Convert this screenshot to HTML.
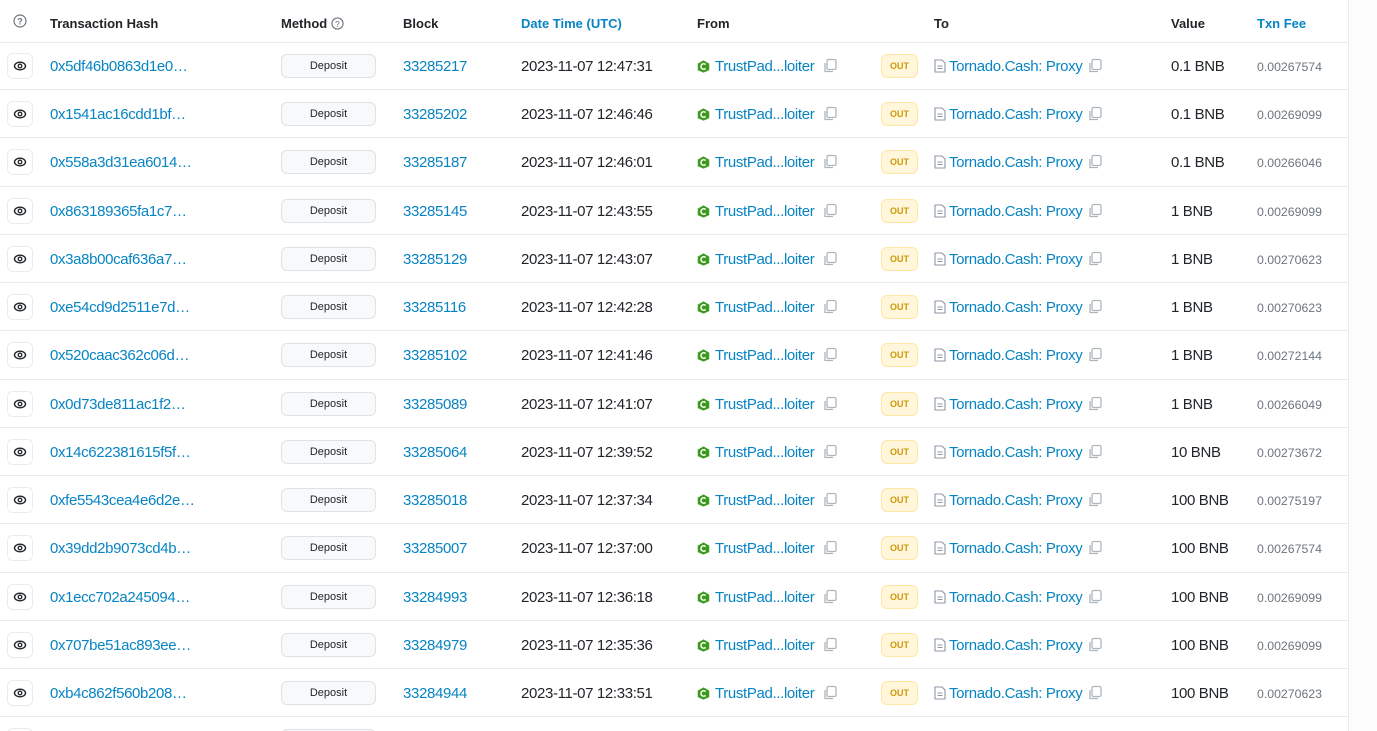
<!DOCTYPE html>
<html><head><meta charset="utf-8"><style>
*{margin:0;padding:0;box-sizing:border-box}
html,body{width:1377px;height:731px;overflow:hidden}
body{background:#fff;font-family:"Liberation Sans",Arial,sans-serif;color:#212529;position:relative}
.side{position:absolute;left:1348px;top:0;width:29px;height:731px;background:#fcfcfd;border-left:1px solid #e9ecef}
.hdr{position:absolute;top:0;left:0;width:1348px;height:43px;border-bottom:1px solid #e9ecef;font-size:13px;font-weight:bold}
.hdr span{position:absolute;top:16px}
.r{position:absolute;left:0;width:1348px;height:48.23px;border-bottom:1px solid #e9ecef;font-size:15px;letter-spacing:-0.35px}
.r>*{position:absolute}
.eye{left:7px;top:11px;width:26px;height:26px;border:1px solid #e9ecef;border-radius:6px;display:flex;align-items:center;justify-content:center}
.h{left:50px;top:16px;color:#0784c3}
.m{left:281px;top:12px;width:95px;height:24px;background:#f8f9fa;border:1px solid #dee2e6;border-radius:6px;font-size:11px;letter-spacing:0;text-align:center;line-height:22px;color:#212529}
.b{left:403px;top:16px;color:#0784c3}
.d{left:521px;top:16px}
.fi{left:697px;top:18px}
.f{left:715px;top:16px;color:#0784c3}
.c1{left:822px;top:16px}
.out{left:881px;top:12px;width:37px;height:24px;background:#fff6dc;border:1px solid #ffe7a3;border-radius:6px;font-size:9px;letter-spacing:0;font-weight:bold;color:#cc9a06;text-align:center;line-height:22px}
.ti{left:934px;top:17px}
.t{left:949px;top:16px;color:#0784c3}
.c2{left:1087px;top:16px}
.v{left:1171px;top:16px}
.fee{left:1257px;top:18px;font-size:12.3px;letter-spacing:0;color:#6c757d}
</style></head><body>
<div class="side"></div>
<div class="hdr">
<span style="left:13px;top:14px"><svg width="14" height="14" viewBox="0 0 14 14"><circle cx="7" cy="7" r="6" fill="none" stroke="#6c757d" stroke-width="1.2"/><text x="7" y="10.5" font-size="9" text-anchor="middle" fill="#6c757d" font-family="Liberation Sans">?</text></svg></span>
<span style="left:50px">Transaction Hash</span>
<span style="left:281px">Method <svg width="13" height="13" viewBox="0 0 14 14" style="vertical-align:-2px"><circle cx="7" cy="7" r="6" fill="none" stroke="#6c757d" stroke-width="1.2"/><text x="7" y="10.5" font-size="9" text-anchor="middle" fill="#6c757d" font-weight="normal" font-family="Liberation Sans">?</text></svg></span>
<span style="left:403px">Block</span>
<span style="left:521px;color:#0784c3">Date Time (UTC)</span>
<span style="left:697px">From</span>
<span style="left:934px">To</span>
<span style="left:1171px">Value</span>
<span style="left:1257px;color:#0784c3">Txn Fee</span>
</div>
<svg width="0" height="0" style="position:absolute"><defs>
<symbol id="eye" viewBox="0 0 14 14"><ellipse cx="7" cy="7" rx="5.5" ry="3.8" fill="none" stroke="#212529" stroke-width="1.4"/><circle cx="7" cy="7" r="1.8" fill="none" stroke="#212529" stroke-width="1.3"/></symbol>
<symbol id="cp" viewBox="0 0 16 16"><rect x="5" y="1.5" width="9" height="10" rx="1.5" fill="none" stroke="#adb5bd" stroke-width="1.3"/><path d="M3 5v8.5h8" fill="none" stroke="#adb5bd" stroke-width="1.3"/></symbol>
<symbol id="doc" viewBox="0 0 12 14"><path d="M1 1h7l3 3v9H1z" fill="none" stroke="#8c98a4" stroke-width="1.1"/><path d="M3.5 7h5M3.5 9.5h5" stroke="#8c98a4" stroke-width="1"/></symbol>
<symbol id="hex" viewBox="0 0 12 12"><path d="M6 0.3l5.3 3v6L6 11.7 0.7 9.3v-6z" fill="#3d9a1f"/><path d="M7.9 4.2A2.5 2.5 0 1 0 7.9 7.8" fill="none" stroke="#fff" stroke-width="1.4"/></symbol>
</defs></svg>
<div class="r" style="top:42px"><div class="eye"><svg width="14" height="14"><use href="#eye"/></svg></div><div class="h">0x5df46b0863d1e0…</div><div class="m">Deposit</div><div class="b">33285217</div><div class="d">2023-11-07 12:47:31</div><svg class="fi" width="13" height="13"><use href="#hex"/></svg><div class="f">TrustPad...loiter</div><svg class="c1" width="16" height="16"><use href="#cp"/></svg><div class="out">OUT</div><svg class="ti" width="12" height="14"><use href="#doc"/></svg><div class="t">Tornado.Cash: Proxy</div><svg class="c2" width="16" height="16"><use href="#cp"/></svg><div class="v">0.1 BNB</div><div class="fee">0.00267574</div></div>
<div class="r" style="top:90.23px"><div class="eye"><svg width="14" height="14"><use href="#eye"/></svg></div><div class="h">0x1541ac16cdd1bf…</div><div class="m">Deposit</div><div class="b">33285202</div><div class="d">2023-11-07 12:46:46</div><svg class="fi" width="13" height="13"><use href="#hex"/></svg><div class="f">TrustPad...loiter</div><svg class="c1" width="16" height="16"><use href="#cp"/></svg><div class="out">OUT</div><svg class="ti" width="12" height="14"><use href="#doc"/></svg><div class="t">Tornado.Cash: Proxy</div><svg class="c2" width="16" height="16"><use href="#cp"/></svg><div class="v">0.1 BNB</div><div class="fee">0.00269099</div></div>
<div class="r" style="top:138.46px"><div class="eye"><svg width="14" height="14"><use href="#eye"/></svg></div><div class="h">0x558a3d31ea6014…</div><div class="m">Deposit</div><div class="b">33285187</div><div class="d">2023-11-07 12:46:01</div><svg class="fi" width="13" height="13"><use href="#hex"/></svg><div class="f">TrustPad...loiter</div><svg class="c1" width="16" height="16"><use href="#cp"/></svg><div class="out">OUT</div><svg class="ti" width="12" height="14"><use href="#doc"/></svg><div class="t">Tornado.Cash: Proxy</div><svg class="c2" width="16" height="16"><use href="#cp"/></svg><div class="v">0.1 BNB</div><div class="fee">0.00266046</div></div>
<div class="r" style="top:186.69px"><div class="eye"><svg width="14" height="14"><use href="#eye"/></svg></div><div class="h">0x863189365fa1c7…</div><div class="m">Deposit</div><div class="b">33285145</div><div class="d">2023-11-07 12:43:55</div><svg class="fi" width="13" height="13"><use href="#hex"/></svg><div class="f">TrustPad...loiter</div><svg class="c1" width="16" height="16"><use href="#cp"/></svg><div class="out">OUT</div><svg class="ti" width="12" height="14"><use href="#doc"/></svg><div class="t">Tornado.Cash: Proxy</div><svg class="c2" width="16" height="16"><use href="#cp"/></svg><div class="v">1 BNB</div><div class="fee">0.00269099</div></div>
<div class="r" style="top:234.92px"><div class="eye"><svg width="14" height="14"><use href="#eye"/></svg></div><div class="h">0x3a8b00caf636a7…</div><div class="m">Deposit</div><div class="b">33285129</div><div class="d">2023-11-07 12:43:07</div><svg class="fi" width="13" height="13"><use href="#hex"/></svg><div class="f">TrustPad...loiter</div><svg class="c1" width="16" height="16"><use href="#cp"/></svg><div class="out">OUT</div><svg class="ti" width="12" height="14"><use href="#doc"/></svg><div class="t">Tornado.Cash: Proxy</div><svg class="c2" width="16" height="16"><use href="#cp"/></svg><div class="v">1 BNB</div><div class="fee">0.00270623</div></div>
<div class="r" style="top:283.15px"><div class="eye"><svg width="14" height="14"><use href="#eye"/></svg></div><div class="h">0xe54cd9d2511e7d…</div><div class="m">Deposit</div><div class="b">33285116</div><div class="d">2023-11-07 12:42:28</div><svg class="fi" width="13" height="13"><use href="#hex"/></svg><div class="f">TrustPad...loiter</div><svg class="c1" width="16" height="16"><use href="#cp"/></svg><div class="out">OUT</div><svg class="ti" width="12" height="14"><use href="#doc"/></svg><div class="t">Tornado.Cash: Proxy</div><svg class="c2" width="16" height="16"><use href="#cp"/></svg><div class="v">1 BNB</div><div class="fee">0.00270623</div></div>
<div class="r" style="top:331.38px"><div class="eye"><svg width="14" height="14"><use href="#eye"/></svg></div><div class="h">0x520caac362c06d…</div><div class="m">Deposit</div><div class="b">33285102</div><div class="d">2023-11-07 12:41:46</div><svg class="fi" width="13" height="13"><use href="#hex"/></svg><div class="f">TrustPad...loiter</div><svg class="c1" width="16" height="16"><use href="#cp"/></svg><div class="out">OUT</div><svg class="ti" width="12" height="14"><use href="#doc"/></svg><div class="t">Tornado.Cash: Proxy</div><svg class="c2" width="16" height="16"><use href="#cp"/></svg><div class="v">1 BNB</div><div class="fee">0.00272144</div></div>
<div class="r" style="top:379.61px"><div class="eye"><svg width="14" height="14"><use href="#eye"/></svg></div><div class="h">0x0d73de811ac1f2…</div><div class="m">Deposit</div><div class="b">33285089</div><div class="d">2023-11-07 12:41:07</div><svg class="fi" width="13" height="13"><use href="#hex"/></svg><div class="f">TrustPad...loiter</div><svg class="c1" width="16" height="16"><use href="#cp"/></svg><div class="out">OUT</div><svg class="ti" width="12" height="14"><use href="#doc"/></svg><div class="t">Tornado.Cash: Proxy</div><svg class="c2" width="16" height="16"><use href="#cp"/></svg><div class="v">1 BNB</div><div class="fee">0.00266049</div></div>
<div class="r" style="top:427.84px"><div class="eye"><svg width="14" height="14"><use href="#eye"/></svg></div><div class="h">0x14c622381615f5f…</div><div class="m">Deposit</div><div class="b">33285064</div><div class="d">2023-11-07 12:39:52</div><svg class="fi" width="13" height="13"><use href="#hex"/></svg><div class="f">TrustPad...loiter</div><svg class="c1" width="16" height="16"><use href="#cp"/></svg><div class="out">OUT</div><svg class="ti" width="12" height="14"><use href="#doc"/></svg><div class="t">Tornado.Cash: Proxy</div><svg class="c2" width="16" height="16"><use href="#cp"/></svg><div class="v">10 BNB</div><div class="fee">0.00273672</div></div>
<div class="r" style="top:476.07px"><div class="eye"><svg width="14" height="14"><use href="#eye"/></svg></div><div class="h">0xfe5543cea4e6d2e…</div><div class="m">Deposit</div><div class="b">33285018</div><div class="d">2023-11-07 12:37:34</div><svg class="fi" width="13" height="13"><use href="#hex"/></svg><div class="f">TrustPad...loiter</div><svg class="c1" width="16" height="16"><use href="#cp"/></svg><div class="out">OUT</div><svg class="ti" width="12" height="14"><use href="#doc"/></svg><div class="t">Tornado.Cash: Proxy</div><svg class="c2" width="16" height="16"><use href="#cp"/></svg><div class="v">100 BNB</div><div class="fee">0.00275197</div></div>
<div class="r" style="top:524.3px"><div class="eye"><svg width="14" height="14"><use href="#eye"/></svg></div><div class="h">0x39dd2b9073cd4b…</div><div class="m">Deposit</div><div class="b">33285007</div><div class="d">2023-11-07 12:37:00</div><svg class="fi" width="13" height="13"><use href="#hex"/></svg><div class="f">TrustPad...loiter</div><svg class="c1" width="16" height="16"><use href="#cp"/></svg><div class="out">OUT</div><svg class="ti" width="12" height="14"><use href="#doc"/></svg><div class="t">Tornado.Cash: Proxy</div><svg class="c2" width="16" height="16"><use href="#cp"/></svg><div class="v">100 BNB</div><div class="fee">0.00267574</div></div>
<div class="r" style="top:572.53px"><div class="eye"><svg width="14" height="14"><use href="#eye"/></svg></div><div class="h">0x1ecc702a245094…</div><div class="m">Deposit</div><div class="b">33284993</div><div class="d">2023-11-07 12:36:18</div><svg class="fi" width="13" height="13"><use href="#hex"/></svg><div class="f">TrustPad...loiter</div><svg class="c1" width="16" height="16"><use href="#cp"/></svg><div class="out">OUT</div><svg class="ti" width="12" height="14"><use href="#doc"/></svg><div class="t">Tornado.Cash: Proxy</div><svg class="c2" width="16" height="16"><use href="#cp"/></svg><div class="v">100 BNB</div><div class="fee">0.00269099</div></div>
<div class="r" style="top:620.76px"><div class="eye"><svg width="14" height="14"><use href="#eye"/></svg></div><div class="h">0x707be51ac893ee…</div><div class="m">Deposit</div><div class="b">33284979</div><div class="d">2023-11-07 12:35:36</div><svg class="fi" width="13" height="13"><use href="#hex"/></svg><div class="f">TrustPad...loiter</div><svg class="c1" width="16" height="16"><use href="#cp"/></svg><div class="out">OUT</div><svg class="ti" width="12" height="14"><use href="#doc"/></svg><div class="t">Tornado.Cash: Proxy</div><svg class="c2" width="16" height="16"><use href="#cp"/></svg><div class="v">100 BNB</div><div class="fee">0.00269099</div></div>
<div class="r" style="top:668.99px"><div class="eye"><svg width="14" height="14"><use href="#eye"/></svg></div><div class="h">0xb4c862f560b208…</div><div class="m">Deposit</div><div class="b">33284944</div><div class="d">2023-11-07 12:33:51</div><svg class="fi" width="13" height="13"><use href="#hex"/></svg><div class="f">TrustPad...loiter</div><svg class="c1" width="16" height="16"><use href="#cp"/></svg><div class="out">OUT</div><svg class="ti" width="12" height="14"><use href="#doc"/></svg><div class="t">Tornado.Cash: Proxy</div><svg class="c2" width="16" height="16"><use href="#cp"/></svg><div class="v">100 BNB</div><div class="fee">0.00270623</div></div>
<div class="r" style="top:717.22px;border:none"><div class="eye"></div><div class="m"></div></div>
</body></html>
